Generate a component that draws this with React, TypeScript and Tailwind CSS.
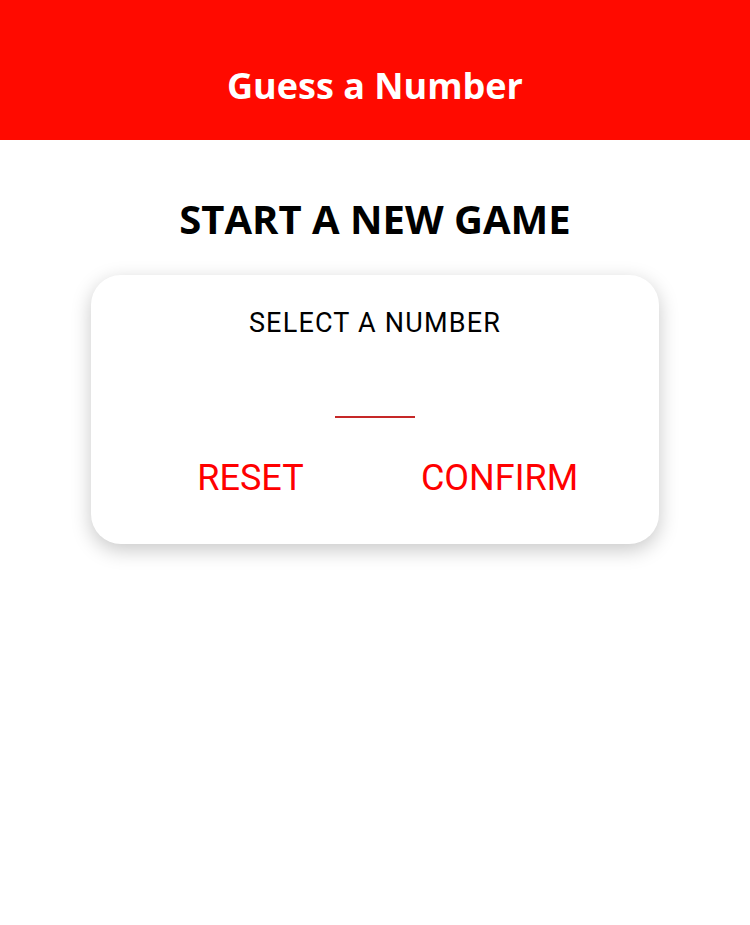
import React from "react";

export default function App() {
  return (
    <div className="w-[750px] h-[925px] bg-white flex flex-col items-center">
      <div className="w-full h-[140px] bg-[#ff0a00] flex items-center justify-center pt-[32px]">
        <h1 className="text-white text-[36px] font-bold leading-none" style={{ fontFamily: '"Open Sans", sans-serif' }}>
          Guess a Number
        </h1>
      </div>
      <h2 className="mt-[57px] text-[40px] font-bold leading-[44px] text-black" style={{ fontFamily: '"Open Sans", sans-serif' }}>
        START A NEW GAME
      </h2>
      <div
        className="mt-[34px] w-[568px] h-[269px] bg-white rounded-[30px] shadow-[0_6px_20px_rgba(0,0,0,0.22)] flex flex-col items-center pt-[30px]"
        style={{ fontFamily: "Roboto, sans-serif" }}
      >
        <div className="text-[27px] leading-[36px] tracking-[1.2px] text-black">SELECT A NUMBER</div>
        <div className="mt-[75px] w-[80px] h-[2px] bg-[#c62828]" />
        <div className="mt-[40px] w-[498px] flex">
          <button className="flex-1 text-[36px] leading-[40px] text-[#ff0000] text-center">RESET</button>
          <button className="flex-1 text-[36px] leading-[40px] text-[#ff0000] text-center">CONFIRM</button>
        </div>
      </div>
    </div>
  );
}
